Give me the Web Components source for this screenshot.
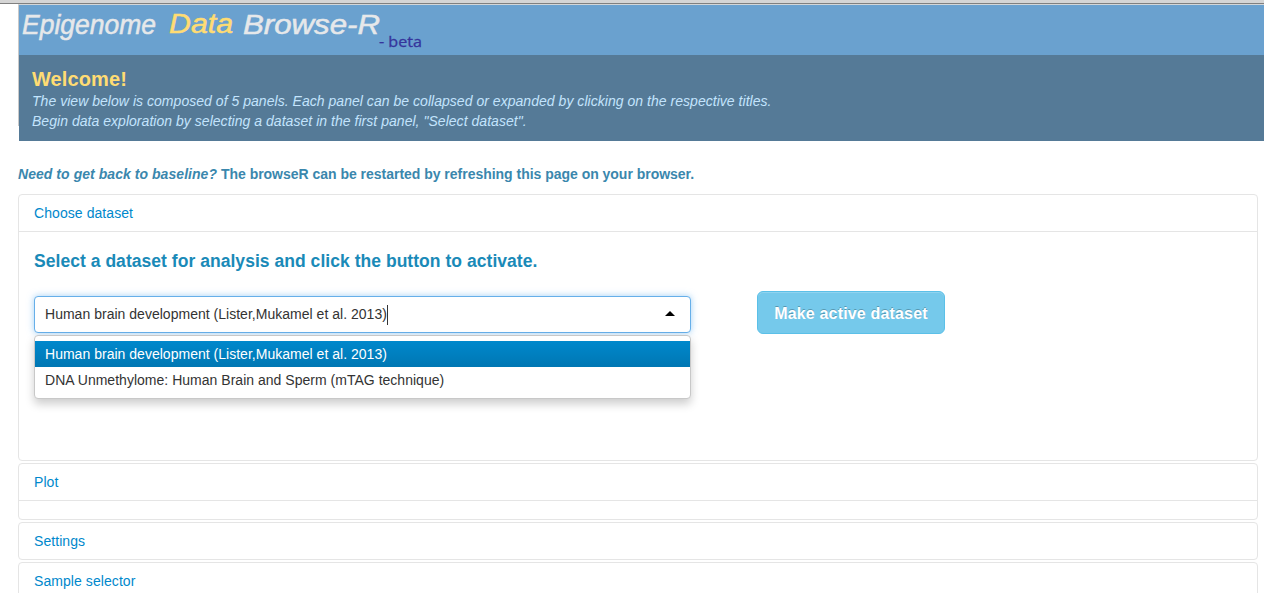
<!DOCTYPE html>
<html lang="en">
<head>
<meta charset="utf-8">
<title>Epigenome Data Browse-R</title>
<style>
html{overflow:hidden}
body{margin:0;height:593px;overflow:hidden;background:#fff;color:#333;font:14px/20px "Liberation Sans",Arial,sans-serif}
</style>
</head>
<body>
<browser-app></browser-app>
<script>
const define = (name, html, setup) => customElements.define(name, class extends HTMLElement {
  constructor() {
    super();
    const t = document.createElement('template');
    t.innerHTML = html;
    this.attachShadow({mode: 'open'}).append(t.content.cloneNode(true));
  }
  connectedCallback() { if (setup) setup(this, this.shadowRoot); }
});

define('site-logo', `<style>
:host{display:block;height:50px;background:#6aa1cf}
svg{display:block}
text{font-family:"Liberation Sans",Arial,sans-serif;font-style:italic;font-size:27px;stroke-width:.5px}
.w{fill:#e6e8ea;stroke:#e6e8ea}.d{fill:#ffdc73;stroke:#ffdc73}
.b{fill:#35349c;stroke:#35349c;stroke-width:.3px;font-size:14px;font-style:normal;font-family:"Open Sans",sans-serif}
</style>
<svg width="420" height="50" viewBox="0 0 420 50">
<text class="w" x="3" y="29" textLength="134" lengthAdjust="spacingAndGlyphs">Epigenome</text>
<text class="d" x="150" y="28" textLength="64" lengthAdjust="spacingAndGlyphs">Data</text>
<text class="w" x="224" y="29" textLength="137" lengthAdjust="spacingAndGlyphs">Browse-R</text>
<text class="b" x="360" y="41.5" textLength="43" lengthAdjust="spacingAndGlyphs">- beta</text>
</svg>`);

define('welcome-banner', `<style>
:host{display:block;box-sizing:border-box;height:86px;padding:13px 13px 0;background:#557a97;color:#c3e4fd;font-style:italic;letter-spacing:.035px}
h1{margin:0 0 1px;font:bold 20px/22px "Liberation Sans",Arial,sans-serif;color:#ffdc73;letter-spacing:.1px}
p{margin:0}
</style>
<h1>Welcome!</h1><p><slot></slot></p>`);

define('accordion-panel', `<style>
:host{display:block;box-sizing:border-box;border:1px solid #e5e5e5;border-radius:4px;margin-bottom:2px}
header{padding:8px 15px;color:#0088cc;letter-spacing:.07px}
.body{border-top:1px solid #e5e5e5;padding:9px 15px}
</style>
<header></header>`, (el, root) => {
  root.querySelector('header').textContent = el.getAttribute('heading');
  if (el.hasAttribute('open')) {
    const body = document.createElement('div');
    body.className = 'body';
    body.append(document.createElement('slot'));
    root.append(body);
  }
});

define('dataset-option', `<style>
:host{display:block;padding:3px 10px;color:#333}
:host([selected]){color:#fff;background:linear-gradient(#08c,#0077b3)}
</style><slot></slot>`);

define('dataset-select', `<style>
:host{display:block;position:relative;width:657px;letter-spacing:.02px}
.input{box-sizing:border-box;height:37px;padding:0 15px 1px 10px;display:flex;align-items:center;background:#fff;border:1px solid #66afe9;border-radius:4px;box-shadow:0 0 7px rgba(82,168,236,.55)}
.caret{width:1px;height:20px;background:#333;margin:1px auto 0 0}
svg{display:block;margin-bottom:1px}
.menu{position:absolute;top:39px;left:0;right:0;padding:5px 0;background:#fff;border:1px solid #c8c8c8;border-radius:4px;box-shadow:0 5px 10px rgba(0,0,0,.2)}
</style>
<div class="input"><span><slot name="value"></slot></span><i class="caret"></i>
<svg width="10" height="5" viewBox="0 0 10 5"><path d="M0 5L5 0L10 5Z" fill="#000"/></svg></div>
<div class="menu"><slot></slot></div>`);

define('action-button', `<style>
:host{display:block}
button{display:block;box-sizing:border-box;width:188px;height:43px;padding:2px 0 0;border:1px solid #5bc0e8;border-radius:6px;background:#75c9eb;color:#fff;font:bold 16px/20px "Liberation Sans",Arial,sans-serif;letter-spacing:.17px;white-space:nowrap;text-shadow:0 -1px 0 rgba(0,0,0,.25);box-shadow:inset 0 1px 0 rgba(255,255,255,.2)}
</style><button><slot></slot></button>`);

define('browser-app', `<style>
:host{display:block}
.chrome{height:3px;background:#d5d5d5;border-bottom:1px solid #808080}
.top{margin-left:18px;border-top:1px solid #d3d6d8;padding-left:1px;background:linear-gradient(#c9c9c9,#c9c9c9) 0 0/1px 121px no-repeat}
.notice{margin:23px 0 10px 18px;color:#3a87ad;font-weight:bold;line-height:20px;letter-spacing:-.02px}
.notice em{letter-spacing:.05px}
main{display:block;margin:0 6px 0 18px}
h4{margin:10px 0 20px;font-size:17.5px;line-height:20px;color:#1a8ab8;letter-spacing:.04px}
.row{display:flex;gap:66px;height:160px}
dataset-select{margin-top:5px}
</style>
<div class="chrome"></div>
<div class="top"><site-logo></site-logo>
<welcome-banner>The view below is composed of 5 panels. Each panel can be collapsed or expanded by clicking on the respective titles.<br>Begin data exploration by selecting a dataset in the first panel, "Select dataset".</welcome-banner></div>
<div class="notice"><em>Need to get back to baseline?</em> The browseR can be restarted by refreshing this page on your browser.</div>
<main>
<accordion-panel heading="Choose dataset" open>
<h4>Select a dataset for analysis and click the button to activate.</h4>
<div class="row"><dataset-select><span slot="value">Human brain development (Lister,Mukamel et al. 2013)</span>
<dataset-option selected>Human brain development (Lister,Mukamel et al. 2013)</dataset-option>
<dataset-option>DNA Unmethylome: Human Brain and Sperm (mTAG technique)</dataset-option></dataset-select>
<action-button>Make active dataset</action-button></div>
</accordion-panel>
<accordion-panel heading="Plot" open></accordion-panel>
<accordion-panel heading="Settings"></accordion-panel>
<accordion-panel heading="Sample selector"></accordion-panel>
</main>`);
</script>
</body>
</html>
